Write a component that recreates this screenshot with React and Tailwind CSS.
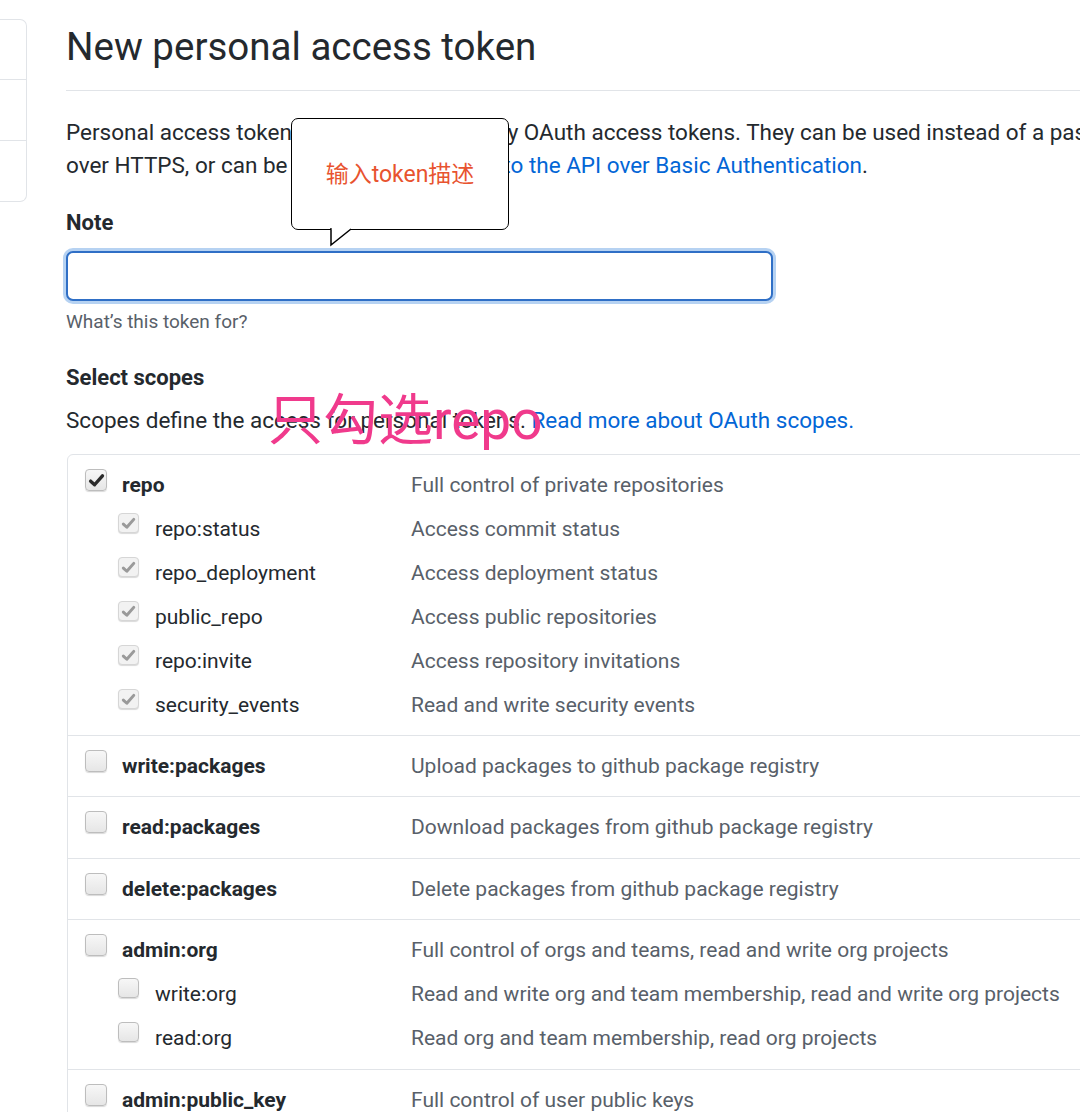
/*
| New personal access token — GitHub settings page (mobile capture, annotated)
*/

function Check({ checked = false, disabled = false, small = false }) {
  const size = small ? "h-[20px] w-[21px]" : "h-[22px] w-[22px]";
  const box = disabled
    ? "border-[#d6d6d6] bg-[#f2f2f2]"
    : "border-[#bdbdbd] bg-gradient-to-b from-[#f7f7f7] to-[#e6e6e6]";
  return (
    <div
      className={`${size} ${box} mt-[6px] flex shrink-0 items-center justify-center rounded-[4px] border shadow-[0_1px_1px_rgba(0,0,0,0.15)]`}
    >
      {checked && (
        <svg viewBox="0 0 16 16" className={small ? "h-[15px] w-[15px]" : "h-[17px] w-[17px]"}>
          <path
            d="M2.5 8.6 L6.2 12 L13.6 3.6"
            fill="none"
            stroke={disabled ? "#9a9a9a" : "#2b2b2b"}
            strokeWidth="3.2"
            strokeLinecap="round"
            strokeLinejoin="round"
          />
        </svg>
      )}
    </div>
  );
}

function ScopeRow({ name, desc, sub = false, checked = false }) {
  return (
    <div className="flex h-[44px] items-start">
      <div className={`flex w-[343px] shrink-0 items-start ${sub ? "pl-[50px]" : "pl-[17px]"}`}>
        <Check checked={checked} disabled={sub && checked} small={sub} />
        <span
          className={`leading-[44px] text-[#24292e] ${sub ? "ml-[16px]" : "ml-[15px] font-bold"}`}
        >
          {name}
        </span>
      </div>
      <span className="leading-[44px] text-[#586069]">{desc}</span>
    </div>
  );
}

function ScopeGroup({ children, loose = false }) {
  return (
    <div className={`border-b border-[#e1e4e8] pt-[8px] last:border-b-0 ${loose ? "pb-[9px]" : "pb-[8px]"}`}>
      {children}
    </div>
  );
}

export default function App() {
  return (
    <div className="relative h-[1112px] w-[1080px] overflow-hidden bg-white font-['Roboto','Noto_Sans_CJK_SC',sans-serif] text-[21px] text-[#24292e]">
      <div className="flex w-[1500px]">
        {/* Sidebar (cut off) */}
        <div className="mt-[19px] flex h-[183px] w-[27px] shrink-0 flex-col rounded-r-[7px] border border-l-0 border-[#e1e4e8]">
          <div className="h-[60px] border-b border-[#e1e4e8]" />
          <div className="h-[61px] border-b border-[#e1e4e8]" />
          <div className="flex-1" />
        </div>

        <div className="ml-[39px] w-[1400px]">
          <h1 className="border-b border-[#e1e4e8] pt-[25px] pb-[21px] text-[38.5px] leading-[44px] font-normal">
            New personal access token
          </h1>

          <p className="mt-[25px] whitespace-nowrap text-[22.5px] leading-[33px]">
            Personal access tokens function like ordinary OAuth access tokens. They can be used instead of a password for Git
            <br />
            over HTTPS, or can be used to{" "}
            <a className="text-[#0366d6]">authenticate to the API over Basic Authentication</a>.
          </p>

          <div className="mt-[24px] text-[22px] font-bold leading-[33px]">Note</div>
          <div className="mt-[12px] h-[50px] w-[707px] rounded-[7px] border-2 border-[#2f6fc6] bg-white shadow-[0_0_0_3px_#b6d2f2]" />
          <div className="mt-[9px] text-[19px] leading-[24px] text-[#586069]">What’s this token for?</div>

          <div className="mt-[27px] text-[22px] font-bold leading-[33px]">Select scopes</div>
          <p className="mt-[10px] whitespace-nowrap text-[22.5px] leading-[33px]">
            Scopes define the access for personal tokens.{" "}
            <a className="text-[#0366d6]">Read more about OAuth scopes.</a>
          </p>

          <div className="mt-[17px] ml-px rounded-[6px] border border-[#e1e4e8]">
            <ScopeGroup>
              <ScopeRow name="repo" desc="Full control of private repositories" checked />
              <ScopeRow sub checked name="repo:status" desc="Access commit status" />
              <ScopeRow sub checked name="repo_deployment" desc="Access deployment status" />
              <ScopeRow sub checked name="public_repo" desc="Access public repositories" />
              <ScopeRow sub checked name="repo:invite" desc="Access repository invitations" />
              <ScopeRow sub checked name="security_events" desc="Read and write security events" />
            </ScopeGroup>
            <ScopeGroup>
              <ScopeRow name="write:packages" desc="Upload packages to github package registry" />
            </ScopeGroup>
            <ScopeGroup loose>
              <ScopeRow name="read:packages" desc="Download packages from github package registry" />
            </ScopeGroup>
            <ScopeGroup>
              <ScopeRow name="delete:packages" desc="Delete packages from github package registry" />
            </ScopeGroup>
            <ScopeGroup loose>
              <ScopeRow name="admin:org" desc="Full control of orgs and teams, read and write org projects" />
              <ScopeRow sub name="write:org" desc="Read and write org and team membership, read and write org projects" />
              <ScopeRow sub name="read:org" desc="Read org and team membership, read org projects" />
            </ScopeGroup>
            <ScopeGroup>
              <ScopeRow name="admin:public_key" desc="Full control of user public keys" />
              <ScopeRow sub name="write:public_key" desc="Write user public keys" />
            </ScopeGroup>
          </div>
        </div>
      </div>

      {/* Callout annotation */}
      <div className="absolute top-[118px] left-[291px] flex h-[112px] w-[218px] items-center justify-center rounded-[7px] border-[1.5px] border-black bg-white">
        <span className="text-[23px] leading-none text-[#e8532f]">输入token描述</span>
      </div>
      <svg className="absolute top-[228px] left-[329px]" width="26" height="20" viewBox="0 0 26 20">
        <path d="M2 0 L2 17 L22 1" fill="white" stroke="black" strokeWidth="1.5" strokeLinejoin="miter" />
        <rect x="2.8" y="0" width="17" height="1.6" fill="white" />
      </svg>

      {/* Handwritten-style note */}
      <div className="absolute top-[385px] left-[268px] text-[55px] leading-[70px] text-[#f03a8c]">只勾选repo</div>
    </div>
  );
}
